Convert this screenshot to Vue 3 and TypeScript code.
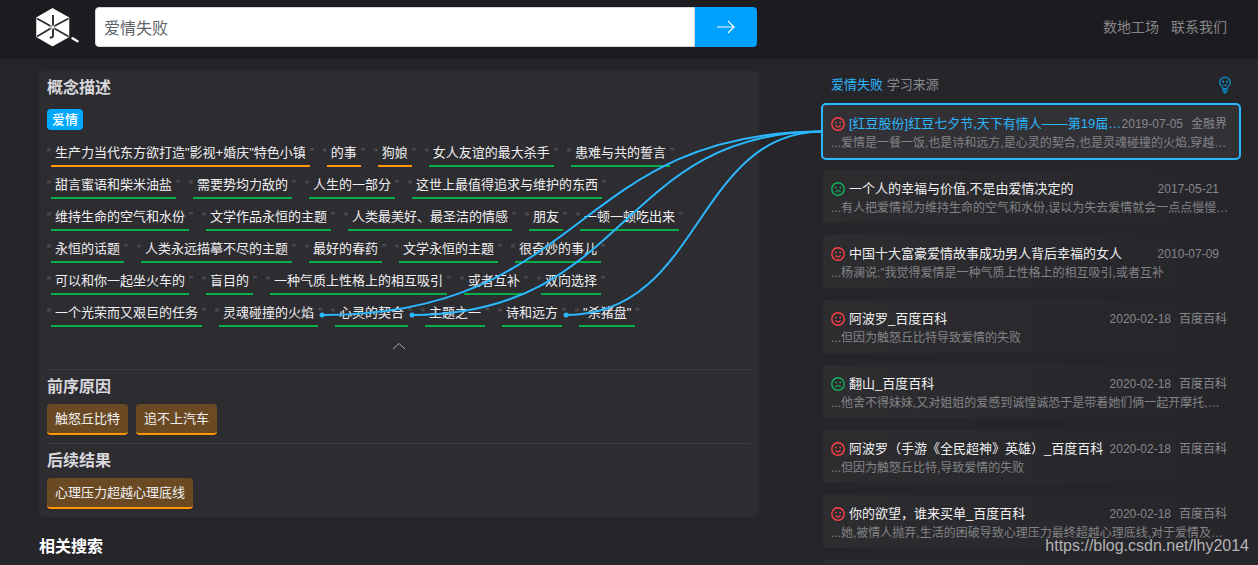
<script setup lang="ts">
import { nextTick, onBeforeUnmount, onMounted, ref } from 'vue'

interface Phrase {
  text: string
  tone: 'orange' | 'green'
  linked?: boolean
}

interface Source {
  title: string
  date: string
  site: string
  excerpt: string
  mood: 'happy' | 'sad'
}

interface Link {
  x: number
  y: number
  d: string
}

const query = ref('爱情失败')

const phrases: Phrase[] = [
  { text: '生产力当代东方欲打造"影视+婚庆"特色小镇', tone: 'orange' },
  { text: '的事', tone: 'orange' },
  { text: '狗娘', tone: 'orange' },
  { text: '女人友谊的最大杀手', tone: 'green' },
  { text: '患难与共的誓言', tone: 'green' },
  { text: '甜言蜜语和柴米油盐', tone: 'green' },
  { text: '需要势均力敌的', tone: 'green' },
  { text: '人生的一部分', tone: 'green' },
  { text: '这世上最值得追求与维护的东西', tone: 'green' },
  { text: '维持生命的空气和水份', tone: 'green' },
  { text: '文学作品永恒的主题', tone: 'green' },
  { text: '人类最美好、最圣洁的情感', tone: 'green' },
  { text: '朋友', tone: 'green' },
  { text: '一顿一顿吃出来', tone: 'green' },
  { text: '永恒的话题', tone: 'green' },
  { text: '人类永远描摹不尽的主题', tone: 'green' },
  { text: '最好的春药', tone: 'green' },
  { text: '文学永恒的主题', tone: 'green' },
  { text: '很奇妙的事儿', tone: 'green' },
  { text: '可以和你一起坐火车的', tone: 'green' },
  { text: '盲目的', tone: 'green' },
  { text: '一种气质上性格上的相互吸引', tone: 'green' },
  { text: '或者互补', tone: 'green' },
  { text: '双向选择', tone: 'green' },
  { text: '一个光荣而又艰巨的任务', tone: 'green' },
  { text: '灵魂碰撞的火焰', tone: 'green', linked: true },
  { text: '心灵的契合', tone: 'green', linked: true },
  { text: '主题之一', tone: 'green' },
  { text: '诗和远方', tone: 'green', linked: true },
  { text: '"杀猪盘"', tone: 'green' },
]

const causes = ['触怒丘比特', '追不上汽车']
const results = ['心理压力超越心理底线']

const sources: Source[] = [
  { title: '[红豆股份]红豆七夕节,天下有情人——第19届…', date: '2019-07-05', site: '金融界', excerpt: '...爱情是一餐一饭,也是诗和远方,是心灵的契合,也是灵魂碰撞的火焰,穿越…', mood: 'happy' },
  { title: '一个人的幸福与价值,不是由爱情决定的', date: '2017-05-21', site: '', excerpt: '...有人把爱情视为维持生命的空气和水份,误以为失去爱情就会一点点慢慢…', mood: 'sad' },
  { title: '中国十大富豪爱情故事成功男人背后幸福的女人', date: '2010-07-09', site: '', excerpt: '...杨澜说:"我觉得爱情是一种气质上性格上的相互吸引,或者互补', mood: 'happy' },
  { title: '阿波罗_百度百科', date: '2020-02-18', site: '百度百科', excerpt: '...但因为触怒丘比特导致爱情的失败', mood: 'happy' },
  { title: '翻山_百度百科', date: '2020-02-18', site: '百度百科', excerpt: '...他舍不得妹妹,又对姐姐的爱感到诚惶诚恐于是带着她们俩一起开摩托,…', mood: 'sad' },
  { title: '阿波罗（手游《全民超神》英雄）_百度百科', date: '2020-02-18', site: '百度百科', excerpt: '...但因为触怒丘比特,导致爱情的失败', mood: 'happy' },
  { title: '你的欲望，谁来买单_百度百科', date: '2020-02-18', site: '百度百科', excerpt: '...她,被情人抛弃,生活的困破导致心理压力最终超越心理底线,对于爱情及…', mood: 'happy' },
]

const selected = ref(0)
const page = ref<HTMLElement | null>(null)
const links = ref<Link[]>([])

// Joins every linked phrase to the left edge of the selected source card.
function drawLinks(): void {
  const root = page.value
  const card = root?.querySelector('.card.selected')
  if (!root || !card) return
  const origin = root.getBoundingClientRect()
  const target = card.getBoundingClientRect()
  const tx = target.left - origin.left
  const ty = target.top + target.height / 2 - origin.top
  links.value = Array.from(root.querySelectorAll('.phrase.linked')).map((el) => {
    const box = el.getBoundingClientRect()
    const x = box.right - origin.left
    const y = box.top + box.height / 2 - origin.top
    const leave = x + (tx - x) * 0.53
    const arrive = (x + tx) / 2
    return { x, y, d: `M${x} ${y}C${leave} ${y} ${arrive} ${ty} ${tx} ${ty}` }
  })
}

async function select(index: number): Promise<void> {
  selected.value = index
  await nextTick()
  drawLinks()
}

onMounted(() => {
  drawLinks()
  document.fonts.ready.then(drawLinks)
  window.addEventListener('resize', drawLinks)
})
onBeforeUnmount(() => window.removeEventListener('resize', drawLinks))
</script>

<template>
  <div ref="page" class="page">
    <header class="topbar">
      <a class="logo" href="#" aria-label="首页">
        <svg width="44" height="40" viewBox="0 0 44 40">
          <path d="M16.500 2L32.500 11V29.500L16.500 38.500L1 29.500V11Z" fill="#fff" stroke="#fff" stroke-width="1.500" stroke-linejoin="round" />
          <path d="M1 11.500L14.500 19M18.500 21.500L32.500 29.500M32.500 11.500L18.500 19M14.500 21.500L1 29.500" stroke="#2a292e" stroke-width="1.700" />
          <path d="M17 8V18.500M17 22V28.500Q17 30.800 13.800 30.500" fill="none" stroke="#2a292e" stroke-width="1.900" />
          <circle cx="16.800" cy="20.200" r="1.800" fill="#fff" stroke="#77767a" stroke-width="1" />
          <path d="M36.500 31.200L41.500 34.200" stroke="#fff" stroke-width="2.400" stroke-linecap="round" />
        </svg>
      </a>
      <form class="search" @submit.prevent>
        <input v-model="query" type="text" aria-label="搜索" />
        <button type="submit" aria-label="搜索">
          <svg width="20" height="16" viewBox="0 0 20 16">
            <path d="M1 8H18M12 2L18 8L12 14" fill="none" stroke="#fff" stroke-width="1.200" />
          </svg>
        </button>
      </form>
      <nav>
        <a href="#">数地工场</a>
        <a href="#">联系我们</a>
      </nav>
    </header>

    <main>
      <div class="left">
        <div class="panel">
          <section>
            <h2>概念描述</h2>
            <span class="concept">爱情</span>
            <div class="phrases">
              <button v-for="p in phrases" :key="p.text" type="button" class="phrase" :class="[p.tone, { linked: p.linked }]">
                <span class="quote">“</span><span class="words">{{ p.text }}</span><span class="quote">”</span>
              </button>
            </div>
            <button type="button" class="collapse" aria-label="收起">
              <svg width="14" height="8" viewBox="0 0 14 8">
                <path d="M1 7L7 1.500L13 7" fill="none" stroke="#a3a3a6" stroke-width="1" />
              </svg>
            </button>
          </section>
          <section class="divided">
            <h2>前序原因</h2>
            <div class="tags">
              <button v-for="c in causes" :key="c" type="button" class="tag">{{ c }}</button>
            </div>
          </section>
          <section class="divided">
            <h2>后续结果</h2>
            <div class="tags">
              <button v-for="r in results" :key="r" type="button" class="tag">{{ r }}</button>
            </div>
          </section>
        </div>
        <h2 class="related">相关搜索</h2>
      </div>

      <aside>
        <div class="aside-head">
          <p><strong>爱情失败</strong> 学习来源</p>
          <svg width="14" height="18" viewBox="0 0 14 18" fill="none" stroke="#0a86bf" stroke-width="1.400">
            <path d="M4.800 12.500C4.800 10.500 1.700 9.500 1.700 6.500A5.300 5.300 0 0 1 12.300 6.500C12.300 9.500 9.200 10.500 9.200 12.500" />
            <path d="M4 5.800H6M8 5.800H10" stroke-width="2" />
            <path d="M5.200 9.300H8.800" />
            <path d="M4.200 12H9.800V14.500L8 17.500H6L4.200 14.500Z" fill="#0a86bf" stroke="none" />
            <path d="M4.200 14.600H9.800" stroke="#26252a" stroke-width="0.500" />
          </svg>
        </div>
        <article v-for="(s, i) in sources" :key="s.title" class="card" :class="{ selected: i === selected }" @click="select(i)">
          <div class="card-head">
            <svg class="face" :class="s.mood" width="14" height="14" viewBox="0 0 14 14" fill="none" stroke="currentColor">
              <circle cx="7" cy="7" r="6.200" stroke-width="1.400" />
              <path d="M4 5.500H5.500M8.500 5.500H10" stroke-width="1.300" />
              <path v-if="s.mood === 'happy'" d="M4.500 8.500Q7 11.500 9.500 8.500" stroke-width="1.200" />
              <path v-else d="M4.500 10Q7 7 9.500 10" stroke-width="1.200" />
            </svg>
            <a class="title" href="#" @click.prevent>{{ s.title }}</a>
            <time>{{ s.date }}</time>
            <span class="site">{{ s.site }}</span>
          </div>
          <p class="excerpt">{{ s.excerpt }}</p>
        </article>
        <div class="card next" aria-hidden="true"></div>
      </aside>
    </main>

    <svg class="links" aria-hidden="true">
      <g v-for="l in links" :key="l.x">
        <path :d="l.d" fill="none" stroke="#2bb8ff" stroke-width="2" />
        <circle :cx="l.x" :cy="l.y" r="2.500" fill="#2bb8ff" />
      </g>
    </svg>
    <div class="watermark">https://blog.csdn.net/lhy2014</div>
  </div>
</template>

<style>
body {
  margin: 0;
  background: #26252a;
}
</style>

<style scoped>
.page {
  position: relative;
  height: 100vh;
  overflow: hidden;
  background: #26252a;
  color: #f0f0f2;
  font-family: "Liberation Sans", "Noto Sans CJK SC", sans-serif;
  font-size: 13px;
}

button,
input {
  font: inherit;
  color: inherit;
  margin: 0;
  padding: 0;
  border: 0;
  background: none;
}

button {
  cursor: pointer;
}

a {
  color: inherit;
  text-decoration: none;
}

h2,
p {
  margin: 0;
}

svg {
  display: block;
}

.topbar {
  display: flex;
  align-items: flex-start;
  height: 59px;
  box-sizing: border-box;
  padding: 7px 31px 0 36px;
  background: #1c1b20;
}

.logo {
  flex: none;
  margin-right: 15px;
}

.search {
  display: flex;
  flex: 0 1 662px;
  min-width: 0;
  height: 40px;
}

.search input {
  flex: 1;
  min-width: 0;
  box-sizing: border-box;
  padding: 0 8px;
  border: 1px solid #d5d9de;
  border-radius: 4px 0 0 4px;
  background: #fff;
  color: #5f6368;
  font-size: 16px;
}

.search button {
  display: grid;
  place-items: center;
  width: 62px;
  border-radius: 0 4px 4px 0;
  background: #00a0ff;
}

nav {
  display: flex;
  gap: 12px;
  margin-left: auto;
  color: #87878a;
  font-size: 14px;
  line-height: 40px;
  white-space: nowrap;
}

main {
  display: grid;
  grid-template-columns: minmax(0, 720fr) minmax(0, 416fr);
  gap: 64px;
  padding: 12px 19px 0 39px;
}

.panel {
  padding: 0 8px 8px;
  border-radius: 4px;
  background: #2d2c31;
}

h2 {
  color: #d8d8dc;
  font-size: 16px;
  line-height: 34px;
}

.related {
  margin-top: 13px;
  color: #fff;
}

.concept {
  display: block;
  width: fit-content;
  margin: 4px 0 13px;
  padding: 0 5px;
  border-radius: 4px;
  background: #00a8ff;
  color: #fff;
  font-weight: 500;
  line-height: 21px;
}

.phrases {
  display: flex;
  flex-wrap: wrap;
  gap: 8px 9px;
}

.phrase {
  display: flex;
  white-space: nowrap;
}

.words {
  padding: 0 4px 2px;
  border-bottom: 2px solid;
  line-height: 20px;
}

.orange .words {
  border-color: #ff9800;
}

.green .words {
  border-color: #06b046;
}

.quote {
  width: 4px;
  color: #626168;
  font-size: 12px;
  line-height: 20px;
}

.collapse {
  display: grid;
  place-items: center;
  width: 100%;
  height: 38px;
  margin-bottom: 4px;
}

.divided {
  border-top: 1px solid #3b3a40;
}

.tags {
  display: flex;
  gap: 8px;
  margin-bottom: 8px;
}

.divided:last-child .tags {
  margin-bottom: 0;
}

.tag {
  padding: 0 8px;
  border-bottom: 2px solid #ff9800;
  border-radius: 4px;
  background: #6b4a23;
  line-height: 29px;
}

.aside-head {
  display: flex;
  align-items: center;
  justify-content: space-between;
  margin-bottom: 6px;
  padding: 0 7px 0 8px;
  color: #8b8b8f;
  line-height: 28px;
}

.aside-head strong {
  color: #2bb8ff;
  font-weight: 400;
}

.card {
  margin-bottom: 12px;
  padding: 9px 12px 6px 8px;
  border-radius: 3px;
  background: linear-gradient(90deg, #2d2d30, #26252a);
}

.card.selected {
  outline: 2px solid #2bb8ff;
  background: #323136;
}

.card.next {
  height: 38px;
}

.card-head {
  display: flex;
  align-items: center;
  line-height: 20px;
}

.face {
  flex: none;
  margin-right: 4px;
}

.happy {
  color: #ff4146;
}

.sad {
  color: #10b45c;
}

.title {
  flex: 1;
  min-width: 0;
  overflow: hidden;
  white-space: nowrap;
}

.selected .title {
  color: #2bb8ff;
}

time,
.site {
  color: #87878b;
  font-size: 12px;
  white-space: nowrap;
}

.site {
  margin-left: 8px;
}

.excerpt {
  overflow: hidden;
  color: #838387;
  font-size: 12px;
  line-height: 18px;
  white-space: nowrap;
}

.links {
  position: absolute;
  inset: 0;
  width: 100%;
  height: 100%;
  pointer-events: none;
}

.watermark {
  position: absolute;
  right: 9px;
  bottom: 9px;
  color: #b4b4b6;
  font-size: 16px;
  line-height: 20px;
}
</style>
